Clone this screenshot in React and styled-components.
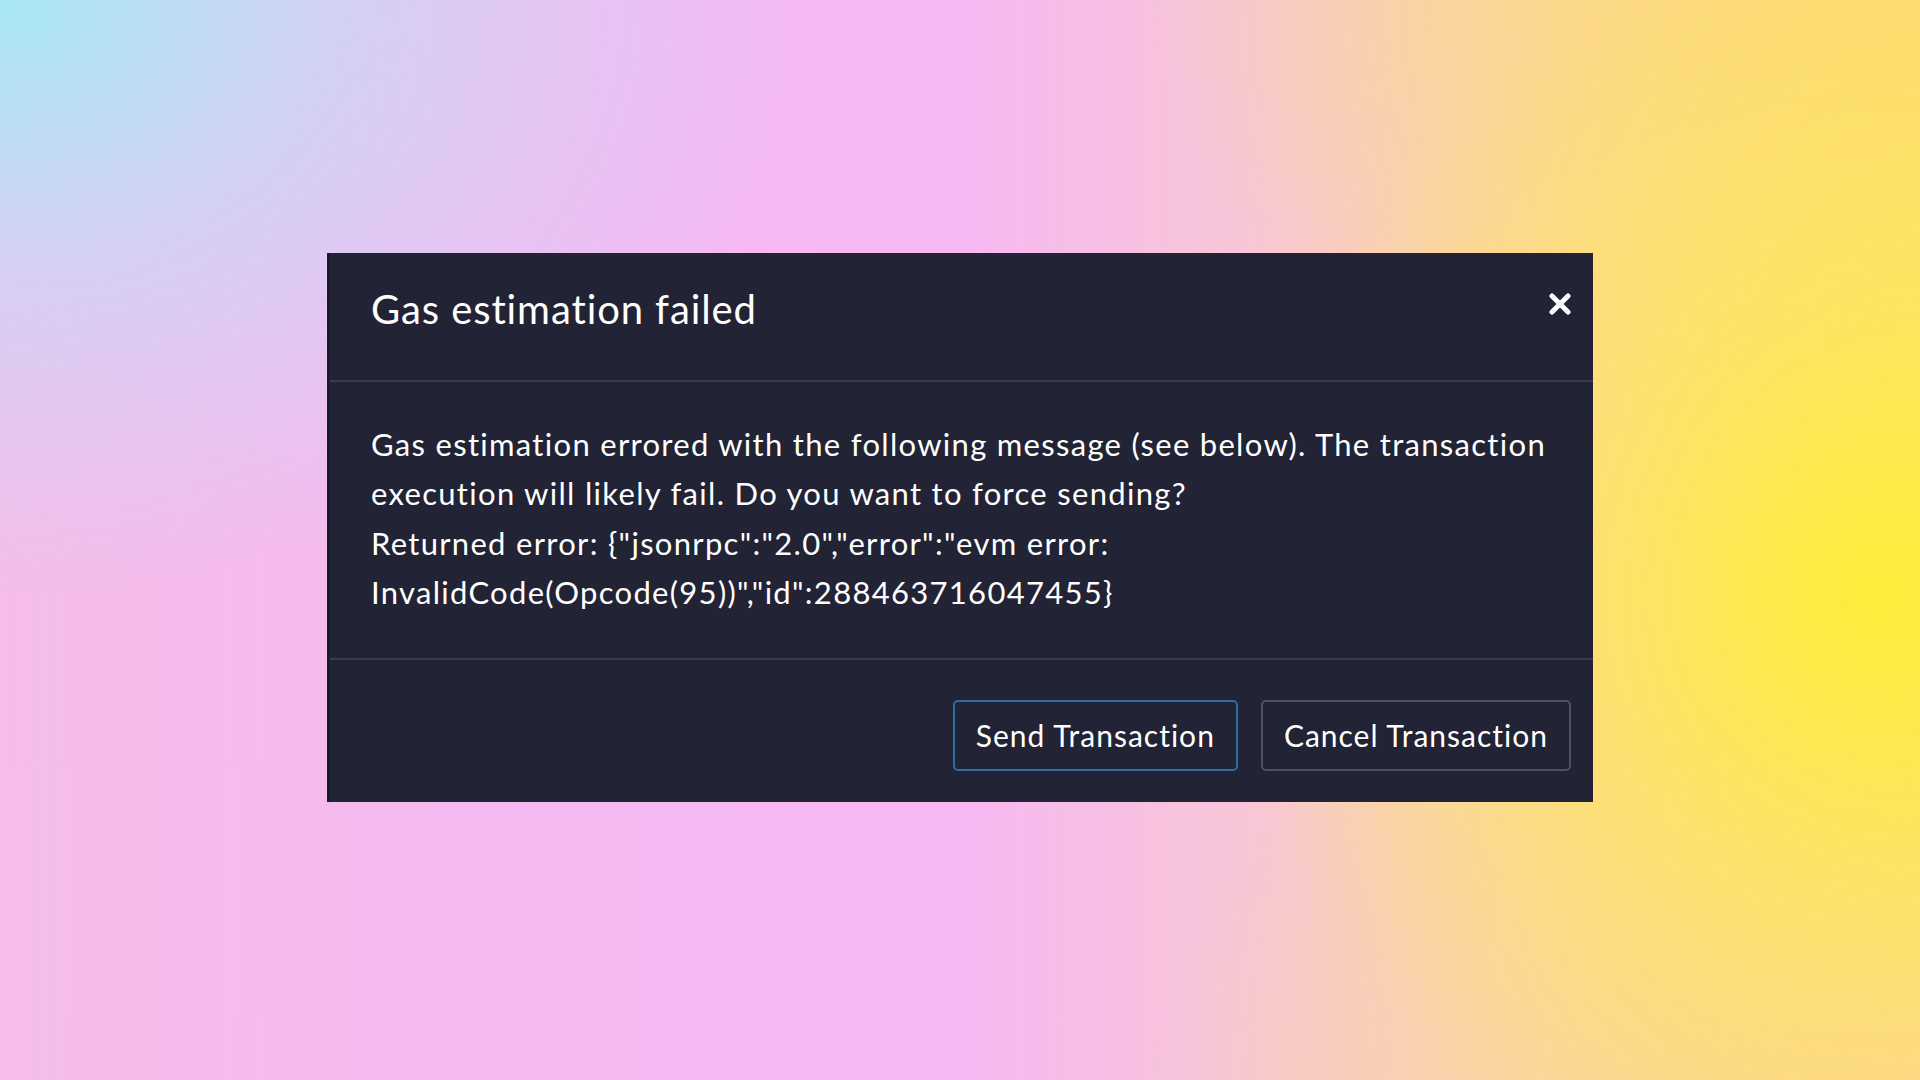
import React from 'react'
import styled, { createGlobalStyle } from 'styled-components'

const GlobalStyle = createGlobalStyle`
    html, body {
        margin : 0;
        padding : 0;
        height : 100%;
    }
    body {
        font-family : Lato, "Noto Sans", sans-serif;
        -webkit-font-smoothing : antialiased;
    }
`

const Backdrop = styled.div`
    width : 1920px;
    height : 1080px;
    display : flex;
    align-items : center;
    justify-content : center;
    padding-bottom : 26px;
    box-sizing : border-box;
    background :
        radial-gradient(ellipse 34% 60% at 98% 55%, rgba(255, 236, 58, 1) 0%, rgba(255, 232, 80, 0.6) 45%, rgba(255, 225, 120, 0) 100%),
        radial-gradient(ellipse 42% 55% at 0% 0%, rgba(168, 233, 243, 1) 0%, rgba(200, 215, 248, 0.7) 45%, rgba(230, 200, 245, 0) 100%),
        radial-gradient(ellipse 40% 45% at 100% 0%, rgba(253, 218, 115, 1) 0%, rgba(250, 210, 160, 0) 100%),
        radial-gradient(ellipse 40% 45% at 100% 100%, rgba(252, 212, 150, 1) 0%, rgba(250, 205, 180, 0) 100%),
        linear-gradient(90deg, #f5bde8 0%, #f5b9f3 35%, #f6b8f2 50%, #f8c6d6 65%, #fbd6a8 82%, #fde27a 100%);
`

const Modal = styled.div`
    width : 1266px;
    background-color : #222335;
    border-left : 3px solid #1a1b28;
    box-sizing : border-box;
    color : #ffffff;
`

const Header = styled.div`
    display : flex;
    justify-content : space-between;
    align-items : flex-start;
    height : 129px;
    box-sizing : border-box;
    padding : 32px 22px 0 41px;
    border-bottom : 2px solid #3a3c4e;
`

const Title = styled.h2`
    margin : 0;
    font-size : 40px;
    line-height : 48px;
    font-weight : 400;
    letter-spacing : 0.9px;
`

const CloseButton = styled.button`
    background : transparent;
    border : 0;
    padding : 0;
    margin-top : 8px;
    width : 22px;
    height : 22px;
    cursor : pointer;
    display : flex;
    svg {
        display : block;
    }
`

const Body = styled.div`
    padding : 38px 38px 40px 41px;
    border-bottom : 2px solid #3a3c4e;
    font-size : 31px;
    line-height : 49.5px;
    letter-spacing : 1.3px;
`

const Paragraph = styled.p`
    margin : 0;
`

const Footer = styled.div`
    display : flex;
    justify-content : flex-end;
    gap : 23px;
    padding : 40px 22px 31px 41px;
`

const Button = styled.button`
    height : 71px;
    padding : 0 21px;
    background : transparent;
    color : #ffffff;
    font-family : Lato, "Noto Sans", sans-serif;
    font-size : 30px;
    letter-spacing : 1px;
    border : 2px solid ${p => p.$primary ? '#2c6f98' : '#4f5064'};
    border-radius : 5px;
    cursor : pointer;
`

const CloseIcon = () => (
    <svg width='22' height='22' viewBox='0 0 22 22'>
        <path d='M3 3 L19 19 M19 3 L3 19' stroke='#ffffff' strokeWidth='5' strokeLinecap='round' />
    </svg>
)

export default function App () {
    return (
        <>
            <GlobalStyle />
            <Backdrop>
                <Modal>
                    <Header>
                        <Title>Gas estimation failed</Title>
                        <CloseButton aria-label='close'>
                            <CloseIcon />
                        </CloseButton>
                    </Header>
                    <Body>
                        <Paragraph>
                            Gas estimation errored with the following message (see below). The transaction execution will likely fail. Do you want to force sending?
                        </Paragraph>
                        <Paragraph>
                            Returned error: {'{"jsonrpc":"2.0","error":"evm error: InvalidCode(Opcode(95))","id":288463716047455}'}
                        </Paragraph>
                    </Body>
                    <Footer>
                        <Button $primary>Send Transaction</Button>
                        <Button>Cancel Transaction</Button>
                    </Footer>
                </Modal>
            </Backdrop>
        </>
    )
}
